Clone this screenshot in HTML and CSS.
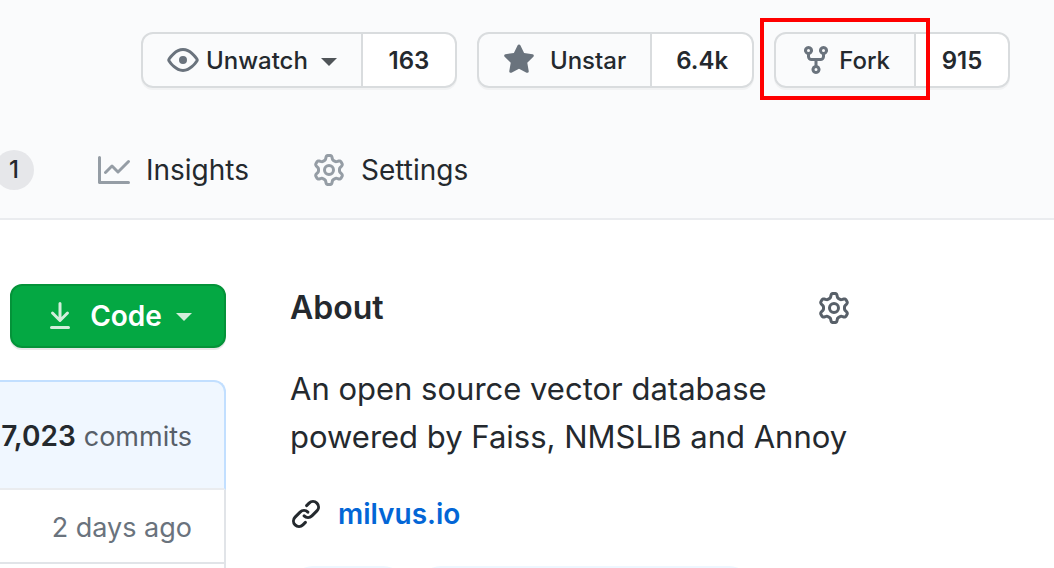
FILE: index.html
```html
<!DOCTYPE html>
<html lang="en">
<head>
<meta charset="utf-8">
<meta name="viewport" content="width=device-width, initial-scale=1">
<title>milvus</title>
<link rel="stylesheet" href="styles.css">
</head>
<body>
<header class="repo-header">
  <div class="actions">
    <div class="btn-group">
      <button class="btn" type="button">
        <svg class="icon" viewBox="0 0 16 16" aria-hidden="true"><path fill-rule="evenodd" d="M1.679 7.932c.412-.621 1.242-1.75 2.366-2.717C5.175 4.242 6.527 3.5 8 3.5c1.473 0 2.824.742 3.955 1.715 1.124.967 1.954 2.096 2.366 2.717a.119.119 0 010 .136c-.412.621-1.242 1.75-2.366 2.717C10.825 11.758 9.473 12.5 8 12.5c-1.473 0-2.824-.742-3.955-1.715C2.92 9.818 2.09 8.69 1.679 8.068a.119.119 0 010-.136zM8 2c-1.981 0-3.67.992-4.933 2.078C1.797 5.169.88 6.423.43 7.1a1.619 1.619 0 000 1.798c.45.678 1.367 1.932 2.637 3.024C4.329 13.008 6.019 14 8 14c1.981 0 3.67-.992 4.933-2.078 1.27-1.091 2.187-2.345 2.637-3.023a1.619 1.619 0 000-1.798c-.45-.678-1.367-1.932-2.637-3.023C11.671 2.992 9.981 2 8 2zm0 8a2 2 0 100-4 2 2 0 000 4z"/></svg>
        Unwatch
        <span class="caret"></span>
      </button>
      <a class="count" href="#watchers">163</a>
    </div>
    <div class="btn-group">
      <button class="btn btn-star" type="button">
        <svg class="icon" viewBox="0 0 16 16" aria-hidden="true"><path d="M8 .25a.75.75 0 01.673.418l1.882 3.815 4.21.612a.75.75 0 01.416 1.279l-3.046 2.97.719 4.192a.75.75 0 01-1.088.791L8 12.347l-3.766 1.98a.75.75 0 01-1.088-.79l.72-4.194L.818 6.374a.75.75 0 01.416-1.28l4.21-.611L7.327.668A.75.75 0 018 .25z"/></svg>
        Unstar
      </button>
      <a class="count" href="#stargazers">6.4k</a>
    </div>
    <div class="btn-group">
      <button class="btn btn-fork" type="button">
        <svg class="icon" viewBox="0 0 16 16" aria-hidden="true"><path fill-rule="evenodd" d="M5 3.25a.75.75 0 11-1.5 0 .75.75 0 011.5 0zm0 2.122a2.25 2.25 0 10-1.5 0v.878A2.25 2.25 0 005.75 8.5h1.5v2.128a2.251 2.251 0 101.5 0V8.5h1.5a2.25 2.25 0 002.25-2.25v-.878a2.25 2.25 0 10-1.5 0v.878a.75.75 0 01-.75.75h-4.5A.75.75 0 015 6.25v-.878zm3.75 7.378a.75.75 0 11-1.5 0 .75.75 0 011.5 0zm3-8.75a.75.75 0 100-1.5.75.75 0 000 1.5z"/></svg>
        Fork
        <span class="highlight"></span>
      </button>
      <a class="count" href="#forks">915</a>
    </div>
  </div>
  <nav class="tabs">
    <span class="counter">1</span>
    <a class="tab" href="#insights">
      <svg class="icon" viewBox="0 0 16 16" aria-hidden="true"><path fill-rule="evenodd" d="M1.5 1.75a.75.75 0 00-1.5 0v12.5c0 .414.336.75.75.75h14.5a.75.75 0 000-1.5H1.5V1.75zm14.28 2.53a.75.75 0 00-1.06-1.06L10 7.94 7.53 5.47a.75.75 0 00-1.06 0L3.22 8.72a.75.75 0 001.06 1.06L7 7.06l2.47 2.47a.75.75 0 001.06 0l5.25-5.25z"/></svg>
      Insights
    </a>
    <a class="tab" href="#settings">
      <svg class="icon" viewBox="0 0 16 16" aria-hidden="true"><path id="gear" fill-rule="evenodd" d="M7.429 1.525a6.593 6.593 0 011.142 0c.036.003.108.036.137.146l.289 1.105c.147.56.55.967.997 1.189.174.086.341.183.501.29.417.278.97.423 1.53.27l1.102-.303c.11-.03.175.016.195.046.219.31.41.641.573.989.014.031.022.11-.059.19l-.815.806c-.411.406-.562.957-.53 1.456a4.588 4.588 0 010 .582c-.032.499.119 1.05.53 1.456l.815.806c.08.08.073.159.059.19a6.494 6.494 0 01-.573.99c-.02.029-.086.074-.195.045l-1.103-.303c-.559-.153-1.112-.008-1.529.27-.16.107-.327.204-.5.29-.449.222-.851.628-.998 1.189l-.289 1.105c-.029.11-.101.143-.137.146a6.613 6.613 0 01-1.142 0c-.036-.003-.108-.037-.137-.146l-.289-1.105c-.147-.56-.55-.967-.997-1.189a4.502 4.502 0 01-.501-.29c-.417-.278-.97-.423-1.53-.27l-1.102.303c-.11.03-.175-.016-.195-.046a6.492 6.492 0 01-.573-.989c-.014-.031-.022-.11.059-.19l.815-.806c.411-.406.562-.957.53-1.456a4.587 4.587 0 010-.582c.032-.499-.119-1.05-.53-1.456l-.815-.806c-.08-.08-.073-.159-.059-.19a6.44 6.44 0 01.573-.99c.02-.029.086-.075.195-.045l1.103.303c.559.153 1.112.008 1.529-.27.16-.107.327-.204.5-.29.449-.222.851-.628.998-1.189l.289-1.105c.029-.11.101-.143.137-.146zM8 0c-.236 0-.47.01-.701.03-.743.065-1.29.615-1.458 1.261l-.29 1.106c-.017.066-.078.158-.211.224a5.994 5.994 0 00-.668.386c-.123.082-.233.09-.3.071L3.27 2.776c-.644-.177-1.392.02-1.82.63a7.977 7.977 0 00-.704 1.217c-.315.675-.111 1.422.363 1.891l.815.806c.05.048.098.147.088.294a6.084 6.084 0 000 .772c.01.147-.038.246-.088.294l-.815.806c-.474.469-.678 1.216-.363 1.891.2.428.436.835.704 1.218.428.609 1.176.806 1.82.63l1.103-.303c.066-.019.176-.011.299.071.213.143.436.272.668.386.133.066.194.158.212.224l.289 1.106c.169.646.715 1.196 1.458 1.26a8.094 8.094 0 001.402 0c.743-.064 1.29-.614 1.458-1.26l.29-1.106c.017-.066.078-.158.211-.224a5.98 5.98 0 00.668-.386c.123-.082.233-.09.3-.071l1.102.302c.644.177 1.392-.02 1.82-.63.268-.382.505-.789.704-1.217.315-.675.111-1.422-.364-1.891l-.814-.806c-.05-.048-.098-.147-.088-.294a6.1 6.1 0 000-.772c-.01-.147.039-.246.088-.294l.814-.806c.475-.469.679-1.216.364-1.891a7.992 7.992 0 00-.704-1.218c-.428-.609-1.176-.806-1.82-.63l-1.103.303c-.066.019-.176.011-.299-.071a5.991 5.991 0 00-.668-.386c-.133-.066-.194-.158-.212-.224L10.16 1.29C9.99.645 9.444.095 8.701.031A8.094 8.094 0 008 0zm1.5 8a1.5 1.5 0 11-3 0 1.5 1.5 0 013 0zM11 8a3 3 0 11-6 0 3 3 0 016 0z"/></svg>
      Settings
    </a>
  </nav>
</header>
<main class="content">
  <section class="files">
    <button class="btn-code" type="button">
      <svg class="icon" viewBox="0 0 16 16" aria-hidden="true"><path fill-rule="evenodd" d="M7.47 10.78a.75.75 0 001.06 0l3.75-3.75a.75.75 0 00-1.06-1.06L8.75 8.44V1.75a.75.75 0 00-1.5 0v6.69L4.78 5.97a.75.75 0 00-1.06 1.06l3.75 3.75zM3.75 13a.75.75 0 000 1.5h8.5a.75.75 0 000-1.5h-8.5z"/></svg>
      Code
      <span class="caret"></span>
    </button>
    <div class="file-box">
      <div class="commits"><strong>7,023</strong> commits</div>
      <div class="file-row">2 days ago</div>
      <div class="file-row"></div>
    </div>
  </section>
  <aside class="about">
    <div class="about-head">
      <h2 class="about-title">About</h2>
      <button class="gear-btn" type="button" aria-label="Edit repository details"><svg class="icon" viewBox="0 0 16 16" aria-hidden="true"><use href="#gear"/></svg></button>
    </div>
    <p class="about-text">An open source vector database powered by Faiss, NMSLIB and Annoy</p>
    <div class="site">
      <svg class="icon" viewBox="0 0 16 16" aria-hidden="true"><path fill-rule="evenodd" d="M7.775 3.275a.75.75 0 001.06 1.06l1.25-1.25a2 2 0 112.83 2.83l-2.5 2.5a2 2 0 01-2.83 0 .75.75 0 00-1.06 1.06 3.5 3.5 0 004.95 0l2.5-2.5a3.5 3.5 0 00-4.95-4.95l-1.25 1.25zm-4.69 9.64a2 2 0 010-2.83l2.5-2.5a2 2 0 012.83 0 .75.75 0 001.06-1.06 3.5 3.5 0 00-4.95 0l-2.5 2.5a3.5 3.5 0 004.95 4.95l1.25-1.25a.75.75 0 00-1.06-1.06l-1.25 1.25a2 2 0 01-2.83 0z"/></svg>
      <a class="site-link" href="#site">milvus.io</a>
    </div>
    <div class="topics">
      <span class="topic topic-short"></span>
      <span class="topic topic-long"></span>
    </div>
  </aside>
</main>
</body>
</html>
```
FILE: styles.css
```css
* { box-sizing: border-box; }

body {
  margin: 0;
  height: 100vh;
  overflow: hidden;
  background: #fff;
  color: #24292e;
  font-family: Inter, "Liberation Sans", sans-serif;
  font-size: 28px;
}

a { color: inherit; text-decoration: none; }
button { font: inherit; color: inherit; margin: 0; cursor: pointer; }

.icon {
  width: 32px;
  height: 32px;
  flex: none;
  fill: currentColor;
}

.caret {
  border: 8px solid transparent;
  border-top-color: currentColor;
  border-bottom: 0;
}

/* Header */
.repo-header {
  padding-top: 32px;
  background: #fafbfc;
  border-bottom: 2px solid #eaecef;
}

.actions {
  display: flex;
  justify-content: flex-end;
  gap: 20px;
  padding-right: 44px;
}

.btn-group {
  display: flex;
  height: 56px;
  font-size: 24px;
  border-radius: 12px;
  box-shadow: 0 2px 0 rgba(27, 31, 35, 0.04);
}

.btn {
  position: relative;
  display: flex;
  align-items: center;
  gap: 7px;
  padding: 0 24px;
  font-weight: 500;
  background: #fafbfc;
  border: 2px solid #d9dcde;
  border-radius: 12px 0 0 12px;
}

.btn .icon { color: #6a737d; }
.btn .caret { margin: 4px 0 0 6px; color: #4f5458; }
.btn-star { gap: 15px; }
.btn-fork { gap: 7px; }

.count {
  display: flex;
  align-items: center;
  justify-content: center;
  min-width: 94px;
  padding: 0 24px;
  font-weight: 600;
  background: #fff;
  border: 2px solid #d9dcde;
  border-left: 0;
  border-radius: 0 12px 12px 0;
}

.highlight {
  position: absolute;
  inset: -16px -16px -14px;
  z-index: 1;
  border: 4px solid #f00;
}

.tabs {
  display: flex;
  align-items: center;
  height: 96px;
  margin: 34px 0 0 -6px;
}

.counter {
  width: 40px;
  height: 40px;
  margin-right: 32px;
  border-radius: 20px;
  background: #e6e7ea;
  font-size: 24px;
  font-weight: 500;
  line-height: 40px;
  text-align: center;
}

.tab {
  display: flex;
  align-items: center;
  gap: 16px;
  padding: 0 32px;
}

.tab .icon { color: #959da5; }

/* Content */
.content {
  display: grid;
  grid-template-columns: 226px minmax(0, 560px);
  gap: 64px;
  padding-top: 64px;
}

.btn-code {
  display: flex;
  align-items: center;
  justify-content: center;
  gap: 14px;
  width: 216px;
  height: 64px;
  margin-left: 10px;
  padding: 0;
  color: #fff;
  font-weight: 600;
  background: #04a843;
  border: 2px solid #049339;
  border-radius: 12px;
  box-shadow: 0 2px 0 rgba(27, 31, 35, 0.1);
}

.btn-code .icon,
.btn-code .caret { color: #d3eedc; }
.btn-code .caret { margin-top: 2px; }

.file-box { margin-top: 32px; font-size: 27px; }

.commits {
  display: flex;
  align-items: center;
  justify-content: flex-end;
  gap: 8px;
  height: 110px;
  padding: 2px 32px 0 0;
  color: #586069;
  background: #f0f7ff;
  border: 2px solid #c2dfff;
  border-bottom-color: #eaecef;
  border-left: 0;
  border-radius: 0 12px 0 0;
}

.commits strong { font-size: 28px; font-weight: 600; color: #24292e; }

.file-row {
  height: 74px;
  padding-right: 32px;
  line-height: 76px;
  text-align: right;
  color: #6a737d;
  border: 2px solid #e1e4e8;
  border-width: 0 2px 2px 0;
}

.about { line-height: 48px; }

.about-head {
  display: flex;
  align-items: center;
  justify-content: space-between;
}

.about-title { margin: 0; font-size: 32px; font-weight: 600; }

.gear-btn {
  display: flex;
  padding: 0;
  color: #586069;
  background: none;
  border: 0;
}

.about-text { margin: 33px 0 29px; font-size: 31px; }

.site { display: flex; align-items: center; gap: 16px; }

.site-link { color: #0366d6; font-weight: 600; }

.topics { display: flex; gap: 12px; margin-top: 28px; }

.topic { height: 46px; border-radius: 23px; background: #eef7ff; }
.topic-short { width: 116px; }
.topic-long { width: 334px; }
```
